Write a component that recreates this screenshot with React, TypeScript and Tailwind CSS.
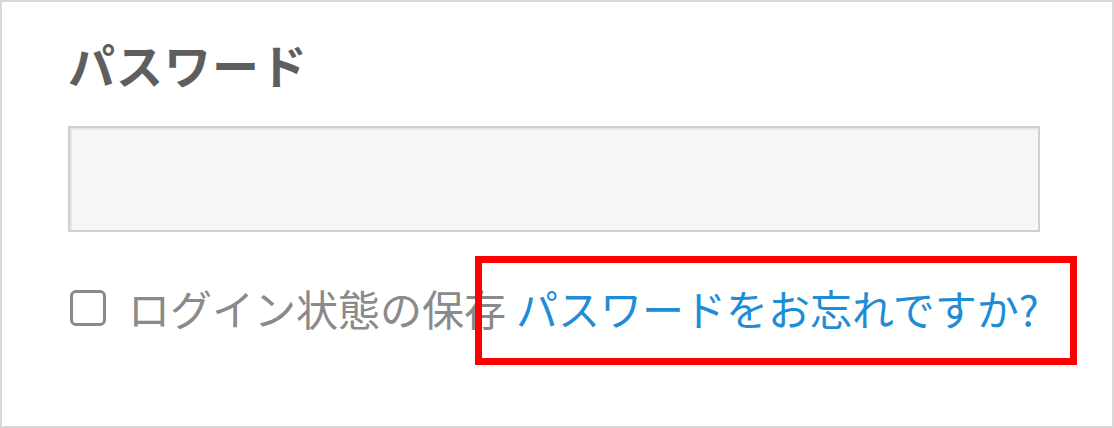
import React from 'react';

const jp = { fontFamily: "Meiryo, 'Noto Sans CJK JP', sans-serif" };

export default function App() {
    return (
        <div className="w-[1114px] h-[428px] bg-white border-2 border-[#d9d9d9] pl-[66px] pr-[72px] pt-[32px]" style={jp}>
            {/* 見出し */}
            <h2 className="text-[47px] leading-[60px] font-semibold text-[#5e5e5e] tracking-[1px]">パスワード</h2>

            {/* 入力欄 */}
            <div className="mt-[32px] h-[106px] w-[972px] border-2 border-[#d0d0d0] bg-[#f6f6f6] shadow-[inset_2px_2px_0_#e6e6e6]" />

            {/* チェックボックスとリンク */}
            <div className="mt-[52px] flex items-center">
                <span className="ml-[2px] w-[36px] h-[36px] rounded-[6px] border-[3px] border-[#8a8a8a] bg-white shrink-0" />
                <span className="ml-[22px] text-[42px] leading-[48px] text-[#8a8a8a] whitespace-nowrap">ログイン状態の保存</span>
                <span className="relative ml-[10px] text-[42px] leading-[48px] text-[#1f8dd6] whitespace-nowrap">
                    パスワードをお忘れですか?
                    {/* 赤枠の注釈 */}
                    <span className="absolute -left-[41px] -right-[38px] -top-[28px] -bottom-[33px] border-[7px] border-[#ff0000]" />
                </span>
            </div>
        </div>
    );
}
